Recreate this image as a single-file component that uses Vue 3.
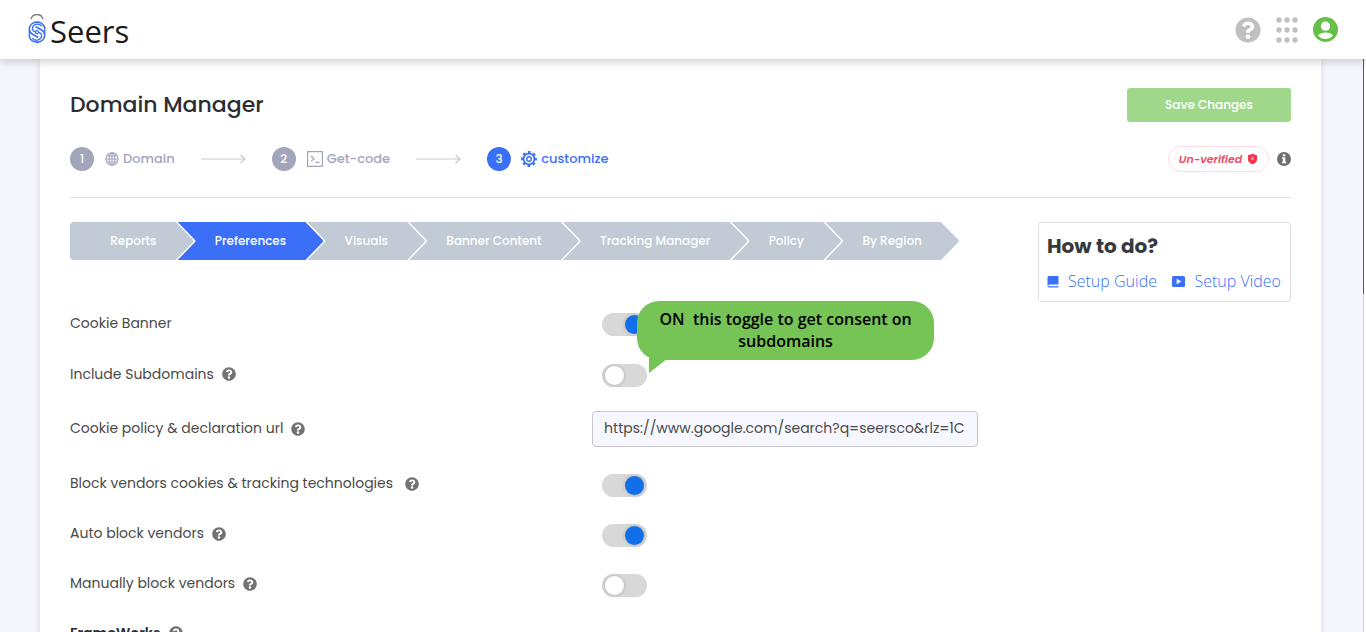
<script setup>
import { ref } from 'vue'

const steps = [
  { id: 1, label: 'Domain', icon: 'globe' },
  { id: 2, label: 'Get-code', icon: 'code' },
  { id: 3, label: 'customize', icon: 'gear' },
]
const activeStep = 3

const tabs = ['Reports', 'Preferences', 'Visuals', 'Banner Content', 'Tracking Manager', 'Policy', 'By Region']
const activeTab = ref('Preferences')

const policyUrl = ref('https://www.google.com/search?q=seersco&rlz=1C')

const settings = ref([
  { id: 'banner', label: 'Cookie Banner', type: 'toggle', on: true },
  { id: 'subdomains', label: 'Include Subdomains', type: 'toggle', on: false, help: true, tip: true },
  { id: 'policy-url', label: 'Cookie policy & declaration url', type: 'url', help: true },
  { id: 'block', label: 'Block vendors cookies & tracking technologies', type: 'toggle', on: true, help: true, wide: true },
  { id: 'auto', label: 'Auto block vendors', type: 'toggle', on: true, help: true },
  { id: 'manual', label: 'Manually block vendors', type: 'toggle', on: false, help: true },
])
</script>

<template>
  <div class="app">
    <header class="topbar">
      <a href="#" class="logo" aria-label="Seers">
        <svg class="logo-mark" viewBox="0 0 20 32" width="20" height="32" fill="none" stroke-linecap="round">
          <path d="M4.200 4.600a6 5.600 0 0 1 11.600 0" stroke="#7d7d7d" stroke-width="1.500" />
          <g stroke="#3b6ff8" stroke-width="1.500">
            <path d="M17.600 13.500a7.800 7.300 0 0 0-15.300 1.500c0 3 1.700 4.500 4 5.700l4.500 2.500" stroke-width="1.700" />
            <path d="M2.400 22.800a7.800 7.300 0 0 0 15.300-1.500c0-3-1.700-4.500-4-5.700L9.200 13.100" stroke-width="1.700" />
            <path d="M17.700 13.500v6M2.300 16.800v6" stroke-width="1.300" />
            <path d="M14.300 11.800a5 4.500 0 0 0-8.900 2.700c0 1.700 1 2.600 2.200 3.200M5.700 24.500a5 4.500 0 0 0 8.900-2.700c0-1.700-1-2.600-2.200-3.200" stroke-width="1.300" />
            <circle cx="10" cy="18.200" r="1.500" stroke-width="1.300" />
          </g>
        </svg>
        <span class="logo-text">Seers</span>
      </a>
      <div class="top-actions">
        <button type="button" class="icon-btn" aria-label="Help">
          <svg viewBox="0 0 512 512" width="26" height="26" fill="#c0c0c0"><path d="M504 256c0 137-111 248-248 248S8 393 8 256 119 8 256 8s248 111 248 248zM262.700 90c-54.500 0-89.300 23-116.500 63.800-3.500 5.300-2.400 12.400 2.700 16.300l34.700 26.300c5.200 3.900 12.600 3 16.700-2.100 17.900-22.700 30.100-35.800 57.300-35.800 20.400 0 45.700 13.100 45.700 33 0 15-12.400 22.700-32.500 34C247.100 238.500 216 254.900 216 296v4c0 6.600 5.400 12 12 12h56c6.600 0 12-5.400 12-12v-1.300c0-28.500 83.200-29.600 83.200-106.700 0-58-60.200-102-116.500-102zM256 338c-25.400 0-46 20.600-46 46s20.600 46 46 46 46-20.600 46-46-20.600-46-46-46z" /></svg>
        </button>
        <button type="button" class="icon-btn" aria-label="Apps">
          <svg viewBox="0 0 22 26" width="22" height="26" fill="#c0c0c0">
            <template v-for="y in [3, 13, 23]" :key="y">
              <circle v-for="x in [3, 11, 19]" :key="x" :cx="x" :cy="y" r="2.700" />
            </template>
          </svg>
        </button>
        <button type="button" class="icon-btn" aria-label="Account">
          <svg viewBox="0 0 26 26" width="25" height="25">
            <circle cx="13" cy="13" r="13" fill="#65bf49" />
            <circle cx="13" cy="9.500" r="4.800" fill="#fff" />
            <path d="M5.300 19.200c1.600-2.200 4.300-3.100 7.700-3.100s6.100.9 7.700 3.100c-1.700 2.400-4.400 3.600-7.700 3.600s-6-1.200-7.700-3.600z" fill="#fff" />
          </svg>
        </button>
      </div>
    </header>

    <div class="page">
      <main class="card">
        <div class="head">
          <h1>Domain Manager</h1>
          <button type="button" class="save">Save Changes</button>
        </div>

        <div class="status-row">
          <ol class="steps">
            <li v-for="s in steps" :key="s.id" :class="{ active: s.id === activeStep }">
              <span class="num">{{ s.id }}</span>
              <svg v-if="s.icon === 'globe'" viewBox="0 0 16 16" width="14" height="14" fill="none" stroke="currentColor" stroke-width="1.300">
                <circle cx="8" cy="8" r="7" /><ellipse cx="8" cy="8" rx="3.300" ry="7" /><path d="M8 1v14M1 8h14M2 4.600h12M2 11.400h12" />
              </svg>
              <svg v-else-if="s.icon === 'code'" viewBox="0 0 16 16" width="16" height="16" fill="none" stroke="currentColor" stroke-width="1.200">
                <path d="M.6.600h14.800v14.800H.6zM4 5l3 2.700L4 10.400M8.500 11.300h4" />
              </svg>
              <svg v-else viewBox="0 0 16 16" width="16" height="16" fill="none" stroke="currentColor">
                <circle cx="8" cy="8" r="5.400" stroke-width="1.700" />
                <circle cx="8" cy="8" r="7" stroke-width="1.900" stroke-dasharray="2.900 2.598" stroke-dashoffset="1.450" />
                <circle cx="8" cy="8" r="2.300" stroke-width="1.400" />
              </svg>
              <span class="step-label">{{ s.label }}</span>
              <svg v-if="s.id < 3" class="arrow" viewBox="0 0 45 10" width="45" height="10" fill="none" stroke="#cbcbcf" stroke-width="1.200"><path d="M0 5h44M39.500 1l4.500 4-4.500 4" /></svg>
            </li>
          </ol>
          <div class="verify">
            <span class="badge">Un-verified
              <svg viewBox="0 0 12 12" width="11" height="12"><path d="M6 .3l5 1.500v4.400c0 2.800-2.200 4.700-5 5.600C3.200 10.900 1 9 1 6.200V1.800z" fill="#fb3550" /><path d="M4.700 4.200l2.600 2.600M7.300 4.200L4.700 6.800" stroke="#fff" stroke-width=".9" /></svg>
            </span>
            <svg viewBox="0 0 14 14" width="14" height="14"><circle cx="7" cy="7" r="7" fill="#6f6f6f" /><path d="M5.800 2.200h2.500v2H5.800zM5 5.300h3.300v4.500h1v1.500H4.900V9.800h1V6.800H5z" fill="#fff" /></svg>
          </div>
        </div>

        <div class="body">
          <div class="settings">
            <nav class="tabs" aria-label="Sections">
              <button v-for="t in tabs" :key="t" type="button" :class="{ active: t === activeTab }" @click="activeTab = t">{{ t }}</button>
            </nav>

            <div class="rows">
              <div v-for="s in settings" :key="s.id" class="row" :class="s.type">
                <div class="label" :class="{ wide: s.wide }">
                  <label :for="s.id">{{ s.label }}</label>
                  <svg v-if="s.help" viewBox="0 0 512 512" width="14" height="14" fill="#757171"><path d="M504 256c0 137-111 248-248 248S8 393 8 256 119 8 256 8s248 111 248 248zM262.700 90c-54.500 0-89.300 23-116.500 63.800-3.500 5.300-2.400 12.400 2.700 16.300l34.700 26.300c5.200 3.900 12.600 3 16.700-2.100 17.900-22.700 30.100-35.800 57.300-35.800 20.400 0 45.700 13.100 45.700 33 0 15-12.400 22.700-32.500 34C247.100 238.500 216 254.900 216 296v4c0 6.600 5.400 12 12 12h56c6.600 0 12-5.400 12-12v-1.300c0-28.500 83.200-29.600 83.200-106.700 0-58-60.200-102-116.500-102zM256 338c-25.400 0-46 20.600-46 46s20.600 46 46 46 46-20.600 46-46-20.600-46-46-46z" /></svg>
                </div>
                <div class="control">
                  <input v-if="s.type === 'toggle'" :id="s.id" v-model="s.on" type="checkbox" class="switch" />
                  <input v-else :id="s.id" v-model="policyUrl" type="text" class="url-input" />
                  <div v-if="s.tip" class="bubble">
                    ON&nbsp; this toggle to get consent on subdomains
                    <svg class="tail" viewBox="0 0 18 17" width="18" height="17"><path d="M0 0h18v3L0 17z" fill="#76c356" /></svg>
                  </div>
                </div>
              </div>
              <h2 class="frameworks">FrameWorks
                <svg viewBox="0 0 512 512" width="14" height="14" fill="#757171"><path d="M504 256c0 137-111 248-248 248S8 393 8 256 119 8 256 8s248 111 248 248zM262.700 90c-54.500 0-89.300 23-116.500 63.800-3.500 5.300-2.400 12.400 2.700 16.300l34.700 26.300c5.200 3.900 12.600 3 16.700-2.100 17.900-22.700 30.100-35.800 57.300-35.800 20.400 0 45.700 13.100 45.700 33 0 15-12.400 22.700-32.500 34C247.100 238.500 216 254.900 216 296v4c0 6.600 5.400 12 12 12h56c6.600 0 12-5.400 12-12v-1.300c0-28.500 83.200-29.600 83.200-106.700 0-58-60.200-102-116.500-102zM256 338c-25.400 0-46 20.600-46 46s20.600 46 46 46 46-20.600 46-46-20.600-46-46-46z" /></svg>
              </h2>
            </div>
          </div>

          <aside class="howto">
            <h2>How to do?</h2>
            <div class="links">
              <a href="#">
                <svg viewBox="0 0 12 13" width="12" height="13" fill="#3b6ff8"><path d="M2 1h9.500v8.600H2.300a.8.800 0 0 0 0 1.700h9.200v1.200H2.500a2 2 0 0 1-2-2v-8A1.500 1.500 0 0 1 2 1z" /></svg>
                Setup Guide
              </a>
              <a href="#">
                <svg viewBox="0 0 13 11" width="13" height="11"><rect x="0" y="0" width="13" height="11" rx="1.500" fill="#3b6ff8" /><path d="M4.700 2.800v5.400L9.300 5.500z" fill="#fff" /></svg>
                Setup Video
              </a>
            </div>
          </aside>
        </div>
      </main>
      <div class="scrollbar"><div class="thumb"></div></div>
    </div>
  </div>
</template>

<style>
body {
  margin: 0;
  overflow: hidden;
}
</style>

<style scoped>
.app {
  display: flex;
  flex-direction: column;
  height: 100vh;
  overflow: hidden;
  font-family: Poppins, Inter, "Liberation Sans", sans-serif;
  font-size: 14px;
  color: #4a4a4a;
  background: #f6f7fe;
}
.app * {
  box-sizing: border-box;
}
button,
input {
  font-family: inherit;
  margin: 0;
}
svg {
  flex: none;
  display: block;
}
.topbar {
  position: relative;
  z-index: 5;
  flex: none;
  display: flex;
  align-items: center;
  justify-content: space-between;
  height: 59px;
  padding: 0 28px 0 27px;
  background: #fff;
  box-shadow: 0 1px 10px rgba(0, 0, 0, 0.25);
}
.logo {
  display: flex;
  align-items: center;
  gap: 3px;
  text-decoration: none;
}
.logo-text {
  font-family: "Open Sans", "Noto Sans", sans-serif;
  font-size: 31px;
  line-height: 32px;
  padding-top: 2px;
  color: #1b1b1b;
}
.top-actions {
  display: flex;
  align-items: center;
  gap: 15px;
}
.icon-btn {
  padding: 0;
  border: 0;
  background: none;
}
.page {
  flex: 1;
  min-height: 0;
  display: flex;
  align-items: stretch;
}
.card {
  flex: 1;
  align-self: flex-start;
  margin: 0 42px 0 40px;
  padding: 29px 30px 40px;
  background: #fff;
  box-shadow: 0 0 8px rgba(0, 0, 0, 0.12);
}
.scrollbar {
  width: 3px;
  background: #fff;
  border-left: 1px solid #d0d0d4;
}
.thumb {
  width: 1px;
  height: 41%;
  margin-left: -1px;
  background: #55555a;
}
.head {
  display: flex;
  align-items: center;
  justify-content: space-between;
}
h1 {
  margin: 0;
  font-size: 22px;
  line-height: 34px;
  font-weight: 500;
  color: #2b2d33;
}
.save {
  width: 164px;
  height: 34px;
  border: 0;
  border-radius: 3px;
  background: #a0d88b;
  color: #fff;
  font-size: 12px;
  font-weight: 500;
}
.status-row {
  display: flex;
  align-items: center;
  justify-content: space-between;
  height: 26px;
  margin-top: 24px;
}
.steps {
  display: flex;
  margin: 0;
  padding: 0;
  list-style: none;
  gap: 26px;
}
.steps li {
  display: flex;
  align-items: center;
  color: #a3a5bb;
  font-size: 13px;
  font-weight: 500;
}
.steps li.active {
  color: #3b6ff8;
}
.num {
  display: flex;
  align-items: center;
  justify-content: center;
  width: 24px;
  height: 24px;
  margin-right: 11px;
  border-radius: 50%;
  background: #a3a5bb;
  color: #fff;
  font-size: 12px;
}
.active .num {
  background: #3b6ff8;
  margin-right: 10px;
}
.step-label {
  margin-left: 4px;
}
.arrow {
  margin-left: 26px;
}
.verify {
  display: flex;
  align-items: center;
  gap: 8px;
}
.badge {
  display: flex;
  align-items: center;
  justify-content: center;
  gap: 5px;
  width: 101px;
  height: 26px;
  border: 1px solid #ffdbe0;
  border-radius: 13px;
  color: #f24b60;
  font-size: 11px;
  font-weight: 600;
  font-style: italic;
}
.body {
  display: flex;
  align-items: flex-start;
  gap: 60px;
  margin-top: 25px;
  padding-top: 24px;
  border-top: 1px solid #e2e2e4;
}
.settings {
  flex: 1;
  min-width: 0;
}
.tabs {
  display: flex;
  height: 38px;
  margin-right: 19px;
}
.tabs button {
  flex: 1 0 auto;
  height: 38px;
  margin-left: -16px;
  padding: 0 37px;
  border: 0;
  background: #c1cad5;
  color: #fff;
  font-size: 12px;
  font-weight: 500;
  white-space: nowrap;
  clip-path: polygon(0 0, calc(100% - 18px) 0, calc(100% - 1px) 46%, 100% 50%, calc(100% - 1px) 54%, calc(100% - 18px) 100%, 0 100%, 17px 54%, 18px 50%, 17px 46%);
}
.tabs button:first-child {
  margin-left: 0;
  padding-left: 40px;
  border-radius: 4px 0 0 4px;
  clip-path: polygon(0 0, calc(100% - 18px) 0, calc(100% - 1px) 46%, 100% 50%, calc(100% - 1px) 54%, calc(100% - 18px) 100%, 0 100%);
}
.tabs button.active {
  background: #3b6ff8;
}
.rows {
  margin-top: 39px;
}
.row {
  display: grid;
  grid-template-columns: 23fr 17fr;
  align-items: center;
  height: 51px;
}
.row.url {
  height: 56px;
  margin-bottom: 3px;
}
.row.url ~ .row {
  height: 50px;
}
.label {
  display: flex;
  align-items: center;
  gap: 8px;
  padding-bottom: 3px;
}
.row.url .label {
  padding-bottom: 1px;
}
.label.wide {
  gap: 12px;
}
.control {
  position: relative;
}
.switch {
  appearance: none;
  display: block;
  width: 45px;
  height: 23px;
  margin-left: 10px;
  padding: 2px 3px;
  border-radius: 12px;
  background: #d8d8d8;
}
.switch::before {
  content: "";
  display: block;
  width: 19px;
  height: 19px;
  border-radius: 50%;
  background: #fff;
  box-shadow: 0 0 4px rgba(0, 0, 0, 0.2);
}
.switch:checked::before {
  margin-left: 20px;
  background: #126fea;
}
.url-input {
  display: block;
  width: 100%;
  height: 36px;
  padding: 0 11px 2px;
  border: 1px solid #c6c6cb;
  border-radius: 4px;
  background: #f7f8ff;
  color: #4a4a4a;
  font-size: 14px;
}
.bubble {
  position: absolute;
  z-index: 2;
  left: 45px;
  bottom: 27px;
  width: 297px;
  padding: 7px 18px 8px;
  border-radius: 22px;
  background: #76c356;
  color: #000;
  font-family: "Open Sans", "Noto Sans", sans-serif;
  font-size: 16px;
  line-height: 22px;
  font-weight: 600;
  text-align: center;
}
.tail {
  position: absolute;
  left: 12px;
  bottom: -13px;
}
.frameworks {
  display: flex;
  align-items: center;
  gap: 8px;
  height: 46px;
  margin: 0;
  color: #2b2d33;
  font-size: 14px;
  font-weight: 600;
}
.howto {
  flex: none;
  width: 253px;
  padding: 8px 9px 8px 8px;
  border: 1px solid #dee2e6;
  border-radius: 3px;
}
.howto h2 {
  margin: 0;
  color: #343a40;
  font-size: 20px;
  line-height: 30px;
  font-weight: 700;
}
.links {
  display: flex;
  justify-content: space-between;
  margin-top: 8px;
}
.links a {
  display: flex;
  align-items: center;
  gap: 9px;
  color: #3b6ff8;
  font-family: "Open Sans", "Noto Sans", sans-serif;
  font-size: 16px;
  line-height: 24px;
  font-weight: 300;
  text-decoration: none;
  white-space: nowrap;
}
</style>
